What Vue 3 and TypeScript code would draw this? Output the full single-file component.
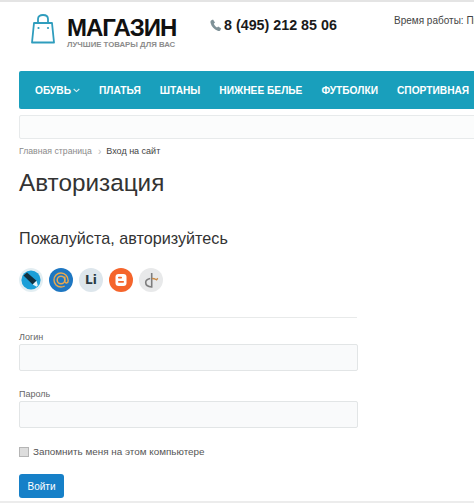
<template>
  <div class="page">
    <header class="head">
      <div class="logo">
        <svg class="bag" width="24" height="30" viewBox="0 0 24 30" fill="none" stroke="#2f9dbd" stroke-width="1.800">
          <path d="M3 9h18l2 19.500H1z" stroke-linejoin="round" />
          <path d="M7 9V5c0-2.500 2-4 5-4s5 1.500 5 4v4" />
          <circle cx="7.500" cy="14" r="1.100" fill="#2f9dbd" stroke="none" />
          <circle cx="17" cy="14" r="1.100" fill="#2f9dbd" stroke="none" />
        </svg>
        <div>
          <div class="brand">МАГАЗИН</div>
          <div class="slogan">ЛУЧШИЕ ТОВАРЫ ДЛЯ ВАС</div>
        </div>
      </div>
      <div class="phone">
        <svg width="12" height="13" viewBox="0 0 12 13"><path d="M1 1.600 3 .6l2 3-1.200 1.200c.5 1.500 1.600 2.900 3.200 3.700l1.200-1.100 3 2-1 2c-.5.6-1.500.8-2.500.4C4.200 10.600 1.600 7.800.6 4 .3 3 .5 2.200 1 1.600z" fill="#7f9298" /></svg>
        <span>8 (495) 212 85 06</span>
      </div>
      <div class="hours">Время работы: Пн-Вс 9:00-21:00</div>
    </header>

    <nav class="menu">
      <a v-for="item in menu" :key="item.name" class="menu-item">
        {{ item.name }}
        <svg v-if="item.drop" width="7" height="5" viewBox="0 0 7 5" fill="none" stroke="#d8eef3" stroke-width="1.100"><path d="M.7 1l2.800 2.600L6.300 1" /></svg>
      </a>
    </nav>
    <div class="search"></div>

    <div class="crumbs">
      <span class="crumb">Главная страница</span>
      <span class="sep">›</span>
      <span class="current">Вход на сайт</span>
    </div>

    <h1>Авторизация</h1>
    <h2>Пожалуйста, авторизуйтесь</h2>

    <div class="socials">
      <span class="soc">
        <svg width="24" height="24" viewBox="0 0 24 24">
          <circle cx="12" cy="12" r="12" fill="#e3eef2" />
          <circle cx="12" cy="12" r="9.600" fill="#1b9fd8" />
          <path d="M4.500 7.500 8 4.500l9.500 8.200-3.800 3.900z" fill="#12303f" />
          <path d="m13.700 16.600 3.800-3.900 1.300 4.900-1.200 1.100z" fill="#e8f4f8" />
        </svg>
      </span>
      <span class="soc">
        <svg width="24" height="24" viewBox="0 0 24 24" fill="none">
          <circle cx="12" cy="12" r="12" fill="#1e77c2" />
          <circle cx="12" cy="12" r="3.800" stroke="#e9a94e" stroke-width="1.500" />
          <path d="M15.800 8.500v4.700c0 2.400 3.400 2.400 3.400-.4C19.200 8.500 16 5 12 5s-7 3-7 7 3 7 7 7c1.500 0 2.700-.4 3.700-1" stroke="#e9a94e" stroke-width="1.400" />
        </svg>
      </span>
      <span class="soc soc-li">Li</span>
      <span class="soc">
        <svg width="24" height="24" viewBox="0 0 24 24" fill="none">
          <circle cx="12" cy="12" r="12" fill="#f5652c" />
          <rect x="6.500" y="6" width="11" height="12" rx="3" fill="#fff" />
          <rect x="9" y="8.800" width="4" height="1.700" rx=".8" fill="#f5652c" />
          <rect x="9" y="13" width="6" height="1.700" rx=".8" fill="#f5652c" />
        </svg>
      </span>
      <span class="soc">
        <svg width="24" height="24" viewBox="0 0 24 24" fill="none">
          <circle cx="12" cy="12" r="12" fill="#e8e9ea" />
          <path d="M12.700 5v14c-3.500-.3-6-2-6-4.500 0-2 1.800-3.500 4.500-4" stroke="#7d7d7d" stroke-width="1.600" />
          <path d="M13 10.500c1.500 0 3 .4 4.500 1.300l1.300-1.500" stroke="#c98a45" stroke-width="1.300" />
        </svg>
      </span>
    </div>

    <form class="form" @submit.prevent>
      <label class="field">
        <span>Логин</span>
        <input type="text" />
      </label>
      <label class="field">
        <span>Пароль</span>
        <input type="password" />
      </label>
      <label class="remember">
        <span class="box"></span>
        Запомнить меня на этом компьютере
      </label>
      <button type="submit">Войти</button>
    </form>
  </div>
</template>

<script setup lang="ts">
const menu = [
  { name: 'ОБУВЬ', drop: true },
  { name: 'ПЛАТЬЯ', drop: false },
  { name: 'ШТАНЫ', drop: false },
  { name: 'НИЖНЕЕ БЕЛЬЕ', drop: false },
  { name: 'ФУТБОЛКИ', drop: false },
  { name: 'СПОРТИВНАЯ', drop: false },
];
</script>

<style>
html, body { margin: 0; background: #fff; overflow: hidden; }
</style>

<style scoped>
.page {
  width: 474px;
  height: 503px;
  box-sizing: border-box;
  overflow: hidden;
  border-top: 2px solid #e4e4e4;
  border-bottom: 2px solid #ececec;
  padding-left: 19px;
  font-family: "Liberation Sans", Arial, sans-serif;
  color: #333;
}
.head {
  display: flex;
  height: 69px;
  white-space: nowrap;
}
.logo {
  display: flex;
  gap: 12px;
  box-sizing: border-box;
  padding: 12px 0 0 12px;
  width: 191px;
  flex: none;
}
.brand {
  font-size: 24px;
  font-weight: 700;
  letter-spacing: -1px;
  line-height: 27px;
  color: #111;
}
.slogan {
  margin-top: -1px;
  font-size: 7.800px;
  font-weight: 700;
  color: #8c8c8c;
  line-height: 10px;
}
.phone {
  display: flex;
  gap: 2px;
  margin-top: 15px;
  font-size: 14.300px;
  font-weight: 700;
  line-height: 17px;
  color: #1a1a1a;
  width: 184px;
  flex: none;
  align-items: center;
  align-self: flex-start;
}
.hours {
  font-size: 10px;
  margin-top: 13px;
  color: #444;
}
.menu {
  display: flex;
  gap: 19px;
  height: 38px;
  width: 480px;
  align-items: center;
  box-sizing: border-box;
  padding-left: 16px;
  background: #199fbc;
  border-radius: 2px 0 0 2px;
  white-space: nowrap;
}
.menu-item {
  display: flex;
  align-items: center;
  gap: 2px;
  font-size: 10.200px;
  font-weight: 700;
  color: #fff;
}
.search {
  height: 22px;
  margin-top: 6px;
  width: 480px;
  background: #fbfcfc;
  border: 1px solid #e7eaeb;
  border-radius: 2px;
}
.crumbs {
  display: flex;
  align-items: center;
  margin-top: 6px;
  height: 12px;
  white-space: nowrap;
}
.crumb { color: #8a8a8a; font-size: 8.700px; }
.sep { color: #bbb; font-size: 10px; margin: 0 5px 0 6px; }
.current { color: #444; font-size: 9px; }
h1 {
  margin: 11px 0 0;
  font-size: 24.300px;
  font-weight: 400;
  line-height: 30px;
  color: #333;
}
h2 {
  margin: 31px 0 0;
  font-size: 16.200px;
  font-weight: 400;
  line-height: 19px;
  color: #333;
}
.socials {
  display: flex;
  gap: 6px;
  margin-top: 20px;
  padding-bottom: 25px;
  width: 338px;
  border-bottom: 1px solid #e8eaea;
}
.soc {
  width: 24px;
  height: 24px;
  display: block;
  flex: none;
}
.soc svg { display: block; }
.soc-li {
  border-radius: 50%;
  background: #dde6ec;
  color: #2a3a44;
  font: 700 12px/24px "DejaVu Sans", sans-serif;
  text-align: center;
}
.form { width: 339px; margin-top: 14px; }
.field { display: block; }
.field + .field { margin-top: 18px; }
.field span {
  display: block;
  font-size: 9px;
  line-height: 11px;
  color: #666;
  margin-bottom: 1px;
}
.field input {
  display: block;
  width: 100%;
  height: 27px;
  box-sizing: border-box;
  background: #f9fafb;
  border: 1px solid #e2e5e6;
  border-radius: 2px;
  outline: none;
}
.remember {
  display: flex;
  align-items: center;
  gap: 4px;
  font-size: 9.900px;
  line-height: 14px;
  color: #555;
  white-space: nowrap;
  margin-top: 17px;
}
.box {
  width: 8px;
  height: 8px;
  background: #ddd;
  border: 1px solid #b5b5b5;
}
button {
  display: block;
  margin-top: 15px;
  width: 45px;
  height: 24px;
  padding: 0;
  background: #1680c8;
  color: #fff;
  border: 0;
  border-radius: 3px;
  font: 400 10px "Liberation Sans", Arial, sans-serif;
}
</style>
